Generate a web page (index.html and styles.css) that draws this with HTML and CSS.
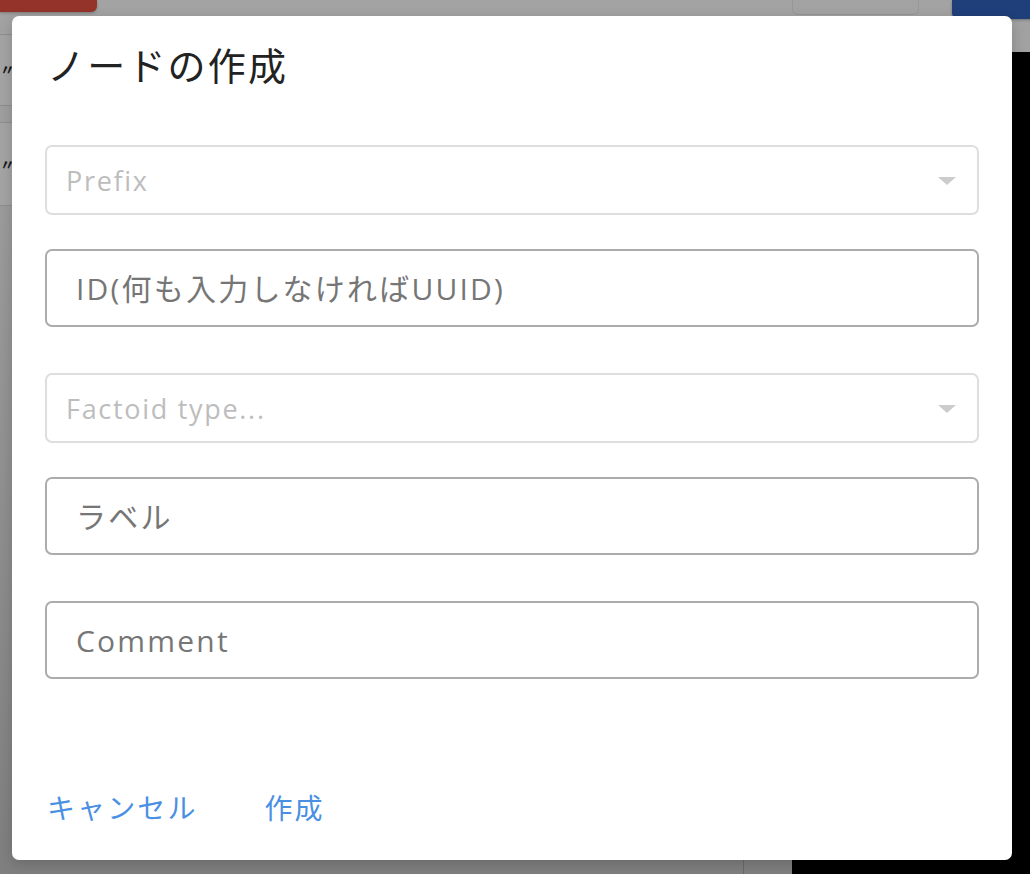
FILE: index.html
```html
<!DOCTYPE html>
<html lang="ja">
<head>
<meta charset="utf-8">
<title>ノードの作成</title>
<link rel="stylesheet" href="styles.css">
</head>
<body>
<div class="app">
  <div class="app-red"></div>
  <div class="app-outline"></div>
  <div class="app-blue"></div>
  <div class="app-row row1"><span class="row-text">〃</span></div>
  <div class="app-row row2"><span class="row-text">〃</span></div>
  <div class="app-black-right"></div>
  <div class="app-black-bottom"></div>
  <div class="app-bottom-line"></div>
</div>
<div class="backdrop">
  <div class="dialog">
    <h1 class="dialog-title">ノードの作成</h1>
    <div class="form">
      <div class="select">
        <span class="select-placeholder">Prefix</span>
        <span class="select-arrow"></span>
      </div>
      <input class="text-input" type="text" placeholder="ID(何も入力しなければUUID)">
      <div class="select">
        <span class="select-placeholder">Factoid type...</span>
        <span class="select-arrow"></span>
      </div>
      <input class="text-input" type="text" placeholder="ラベル">
      <input class="text-input" type="text" placeholder="Comment">
    </div>
    <div class="actions">
      <button class="action-btn" type="button">キャンセル</button>
      <button class="action-btn" type="button">作成</button>
    </div>
  </div>
</div>
</body>
</html>
```

FILE: styles.css
```css
html, body {
  margin: 0;
  padding: 0;
  height: 100%;
}
body {
  font-family: "Open Sans", "Noto Sans CJK JP", sans-serif;
  background: linear-gradient(to bottom, #a3a3a3 0%, #969696 40%, #7f7f7f 100%);
  overflow: hidden;
  position: relative;
  width: 1030px;
  height: 874px;
}

/* background app fragments (dimmed by the modal overlay) */
.app {
  position: absolute;
  inset: 0;
}
.app-red {
  position: absolute;
  left: 0;
  top: 0;
  width: 97px;
  height: 12px;
  background: #943329;
  border-bottom-right-radius: 6px;
  box-shadow: 0 1px 3px rgba(0,0,0,0.25);
}
.app-outline {
  position: absolute;
  left: 792px;
  top: -4px;
  width: 127px;
  height: 19px;
  border: 1px solid #979797;
  border-radius: 6px;
  box-sizing: border-box;
}
.app-blue {
  position: absolute;
  left: 952px;
  top: 0;
  width: 90px;
  height: 19px;
  background: #1f3f7a;
  border-bottom-left-radius: 6px;
  box-shadow: 0 1px 3px rgba(0,0,0,0.3);
}
.app-row {
  position: absolute;
  left: 0;
  width: 20px;
  background: #a4a4a4;
  border-top: 1px solid #8e8e8e;
  border-bottom: 1px solid #8e8e8e;
  display: flex;
  align-items: center;
}
.row1 { top: 34px; height: 70px; }
.row2 { top: 122px; height: 82px; }
.row-text {
  font-family: "Noto Sans CJK JP", sans-serif;
  font-size: 15px;
  font-weight: 700;
  line-height: 18px;
  color: #1a1a1a;
  margin-left: 0;
  margin-top: -2px;
}
.row2 .row-text {
  margin-top: 0;
}
.app-black-right {
  position: absolute;
  left: 1000px;
  top: 52px;
  width: 30px;
  height: 822px;
  background: #000;
}
.app-black-bottom {
  position: absolute;
  left: 792px;
  top: 845px;
  width: 238px;
  height: 29px;
  background: #000;
}
.app-bottom-line {
  position: absolute;
  left: 743px;
  top: 845px;
  width: 1px;
  height: 29px;
  background: #6a6a6a;
}

/* modal */
.backdrop {
  position: absolute;
  inset: 0;
  padding: 16px 18px 14px 12px;
  box-sizing: border-box;
  display: flex;
}
.dialog {
  flex: 1;
  background: #fff;
  border-radius: 7px;
  box-shadow: 0 4px 14px rgba(0,0,0,0.18);
  padding: 24px 33px 0 33px;
  display: flex;
  flex-direction: column;
}
.dialog-title {
  margin: 0 0 57px 2px;
  font-family: "Noto Sans CJK JP", sans-serif;
  font-size: 38px;
  font-weight: 400;
  line-height: 48px;
  color: #222;
  letter-spacing: 2.2px;
}
.form {
  display: flex;
  flex-direction: column;
}
.select {
  height: 70px;
  box-sizing: border-box;
  border: 2px solid #dedede;
  border-radius: 7px;
  display: flex;
  align-items: center;
  justify-content: space-between;
  padding: 0 21px 0 19px;
  margin-bottom: 34px;
}
.select-placeholder {
  font-size: 27px;
  letter-spacing: 1.7px;
  color: #bdbdbd;
}
.select-arrow {
  width: 0;
  height: 0;
  border-left: 9px solid transparent;
  border-right: 9px solid transparent;
  border-top: 8px solid #cccccc;
  margin-top: 2px;
}
.text-input {
  height: 78px;
  box-sizing: border-box;
  border: 2px solid #acacac;
  border-radius: 7px;
  padding: 0 29px;
  margin: 0 0 46px 0;
  font-family: "Open Sans", "Noto Sans CJK JP", sans-serif;
  font-size: 30px;
  letter-spacing: 2.2px;
  color: #333;
  background: #fff;
  outline: none;
}
.text-input::placeholder {
  color: #767676;
}
.actions {
  margin-top: auto;
  margin-bottom: 33px;
  display: flex;
  gap: 65px;
}
.action-btn {
  background: none;
  border: none;
  padding: 0;
  margin-left: 2px;
  font-family: "Noto Sans CJK JP", sans-serif;
  font-size: 28px;
  line-height: 40px;
  color: #4a90e2;
  letter-spacing: 2.1px;
  cursor: pointer;
}
```
